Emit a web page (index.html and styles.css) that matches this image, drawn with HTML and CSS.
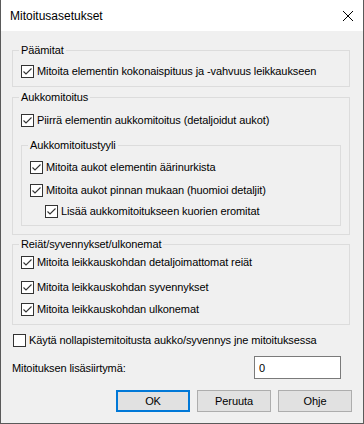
FILE: index.html
```html
<!DOCTYPE html>
<html lang="fi">

<head>
    <meta charset="UTF-8">
    <meta name="viewport" content="width=device-width, initial-scale=1.0">
    <title>Mitoitusasetukset</title>
    <link rel="stylesheet" href="styles.css">
</head>

<body>
    <div class="window">
        <div class="titlebar">
            <span class="title">Mitoitusasetukset</span>
            <svg class="close" width="10" height="10" viewBox="0 0 10 10">
                <path d="M0 0 L10 10 M10 0 L0 10" stroke="#000" stroke-width="1" fill="none" />
            </svg>
        </div>

        <div class="content">
            <fieldset class="group group-main">
                <legend>Päämitat</legend>
                <label class="check">
                    <svg class="box" width="13" height="13" viewBox="0 0 13 13"><rect x="0.5" y="0.5" width="12" height="12" fill="#fff" stroke="#333" /><path d="M2.5 6.5 L5 9 L10.5 3.5" fill="none" stroke="#333" stroke-width="1.1" /></svg>
                    Mitoita elementin kokonaispituus ja -vahvuus leikkaukseen
                </label>
            </fieldset>

            <fieldset class="group group-openings">
                <legend>Aukkomitoitus</legend>
                <label class="check">
                    <svg class="box" width="13" height="13" viewBox="0 0 13 13"><rect x="0.5" y="0.5" width="12" height="12" fill="#fff" stroke="#333" /><path d="M2.5 6.5 L5 9 L10.5 3.5" fill="none" stroke="#333" stroke-width="1.1" /></svg>
                    Piirrä elementin aukkomitoitus (detaljoidut aukot)
                </label>

                <fieldset class="group group-style">
                    <legend>Aukkomitoitustyyli</legend>
                    <label class="check">
                        <svg class="box" width="13" height="13" viewBox="0 0 13 13"><rect x="0.5" y="0.5" width="12" height="12" fill="#fff" stroke="#333" /><path d="M2.5 6.5 L5 9 L10.5 3.5" fill="none" stroke="#333" stroke-width="1.1" /></svg>
                        Mitoita aukot elementin äärinurkista
                    </label>
                    <label class="check style-second">
                        <svg class="box" width="13" height="13" viewBox="0 0 13 13"><rect x="0.5" y="0.5" width="12" height="12" fill="#fff" stroke="#333" /><path d="M2.5 6.5 L5 9 L10.5 3.5" fill="none" stroke="#333" stroke-width="1.1" /></svg>
                        Mitoita aukot pinnan mukaan (huomioi detaljit)
                    </label>
                    <label class="check style-sub">
                        <svg class="box" width="13" height="13" viewBox="0 0 13 13"><rect x="0.5" y="0.5" width="12" height="12" fill="#fff" stroke="#333" /><path d="M2.5 6.5 L5 9 L10.5 3.5" fill="none" stroke="#333" stroke-width="1.1" /></svg>
                        Lisää aukkomitoitukseen kuorien eromitat
                    </label>
                </fieldset>
            </fieldset>

            <fieldset class="group group-holes">
                <legend>Reiät/syvennykset/ulkonemat</legend>
                <label class="check">
                    <svg class="box" width="13" height="13" viewBox="0 0 13 13"><rect x="0.5" y="0.5" width="12" height="12" fill="#fff" stroke="#333" /><path d="M2.5 6.5 L5 9 L10.5 3.5" fill="none" stroke="#333" stroke-width="1.1" /></svg>
                    Mitoita leikkauskohdan detaljoimattomat reiät
                </label>
                <label class="check holes-second">
                    <svg class="box" width="13" height="13" viewBox="0 0 13 13"><rect x="0.5" y="0.5" width="12" height="12" fill="#fff" stroke="#333" /><path d="M2.5 6.5 L5 9 L10.5 3.5" fill="none" stroke="#333" stroke-width="1.1" /></svg>
                    Mitoita leikkauskohdan syvennykset
                </label>
                <label class="check holes-third">
                    <svg class="box" width="13" height="13" viewBox="0 0 13 13"><rect x="0.5" y="0.5" width="12" height="12" fill="#fff" stroke="#333" /><path d="M2.5 6.5 L5 9 L10.5 3.5" fill="none" stroke="#333" stroke-width="1.1" /></svg>
                    Mitoita leikkauskohdan ulkonemat
                </label>
            </fieldset>

            <label class="check zero-point">
                <svg class="box" width="13" height="13" viewBox="0 0 13 13"><rect x="0.5" y="0.5" width="12" height="12" fill="#fff" stroke="#333" /></svg>
                Käytä nollapistemitoitusta aukko/syvennys jne mitoituksessa
            </label>

            <div class="offset-row">
                <span>Mitoituksen lisäsiirtymä:</span>
                <input type="text" class="offset-input" value="0">
            </div>

            <div class="buttons">
                <button class="btn btn-default">OK</button>
                <button class="btn">Peruuta</button>
                <button class="btn">Ohje</button>
            </div>
        </div>
    </div>
</body>

</html>
```

FILE: styles.css
```css
body {
    margin: 0;
    padding: 0;
    font-family: "Liberation Sans", Arial, sans-serif;
    font-size: 11px;
    letter-spacing: -0.1px;
    color: #000;
    background-color: #f0f0f0;
}

.window {
    width: 364px;
    height: 424px;
    box-sizing: border-box;
    border: 1px solid #5a5a5a;
    border-top: none;
    background-color: #f0f0f0;
    display: flex;
    flex-direction: column;
}

.titlebar {
    height: 31px;
    flex: none;
    background-color: #fff;
    display: flex;
    align-items: center;
    justify-content: space-between;
    padding: 0 10px 0 9px;
}

.title {
    font-size: 12px;
    letter-spacing: 0;
}

.close {
    display: block;
}

.content {
    padding-top: 12px;
}

/* group boxes */
.group {
    margin: 0 0 0 11px;
    min-width: 0;
    width: 338px;
    box-sizing: border-box;
    border: 1px solid #dcdcdc;
    padding: 5px 0 7px 8px;
}

.group legend {
    margin-left: -2px;
    padding: 0 2px;
    line-height: 15px;
}

.group-openings {
    margin-top: 3px;
    padding-top: 7px;
    padding-bottom: 8px;
}

.group-style {
    margin: 10px 0 0 0;
    width: 320px;
    padding: 6px 0 6px 8px;
}

.group-holes {
    margin-top: 2px;
    padding-top: 2px;
    padding-bottom: 7px;
}

/* checkboxes */
.check {
    display: flex;
    align-items: center;
    gap: 3px;
    height: 16px;
    white-space: nowrap;
}

.box {
    display: block;
    flex: none;
}

.style-second {
    margin-top: 7px;
}

.style-sub {
    margin-top: 5px;
    margin-left: 15px;
}

.holes-second {
    margin-top: 9px;
}

.holes-third {
    margin-top: 6px;
}

.zero-point {
    margin: 7px 0 0 12px;
}

/* offset field */
.offset-row {
    margin-top: 8px;
    height: 23px;
    display: flex;
    align-items: center;
    justify-content: space-between;
    padding: 0 22px 0 11px;
}

.offset-input {
    width: 87px;
    height: 23px;
    box-sizing: border-box;
    border: 1px solid #7a7a7a;
    background-color: #fff;
    padding: 0 4px;
    font-family: inherit;
    font-size: 11px;
    color: #000;
    margin: 0;
    outline: none;
}

/* buttons */
.buttons {
    margin-top: 11px;
    display: flex;
    justify-content: flex-end;
    gap: 7px;
    padding-right: 11px;
}

.btn {
    width: 74px;
    height: 22px;
    box-sizing: border-box;
    margin: 0;
    padding: 0;
    border: 1px solid #adadad;
    background-color: #e1e1e1;
    font-family: inherit;
    font-size: 11px;
    letter-spacing: -0.1px;
    color: #000;
}

.btn-default {
    border: 2px solid #0078d7;
}
```
